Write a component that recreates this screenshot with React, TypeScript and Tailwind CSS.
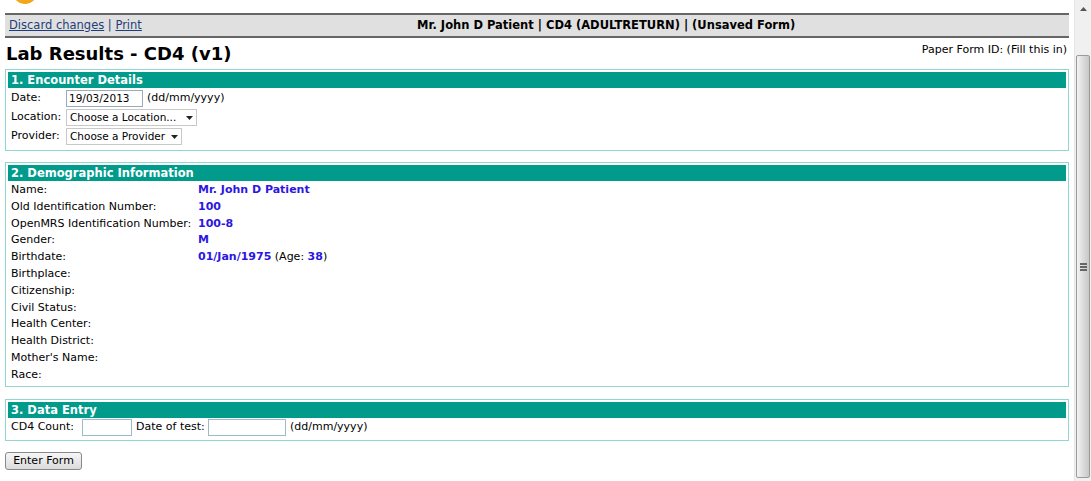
const font = { fontFamily: '"DejaVu Sans", Verdana, sans-serif' };

const demographics: [string, string | null][] = [
  ['Name:', 'Mr. John D Patient'],
  ['Old Identification Number:', '100'],
  ['OpenMRS Identification Number:', '100-8'],
  ['Gender:', 'M'],
  ['Birthdate:', '01/Jan/1975'],
  ['Birthplace:', null],
  ['Citizenship:', null],
  ['Civil Status:', null],
  ['Health Center:', null],
  ['Health District:', null],
  ["Mother's Name:", null],
  ['Race:', null],
];

function Section({ title, children }: { title: string; children: React.ReactNode }) {
  return (
    <div className="border border-[#8ed8cf] p-[2px]">
      <div className="bg-[#009b8b] text-white font-bold px-[3px] h-[16px] leading-[16px] text-[11.5px]">{title}</div>
      <div className="px-[3px]">{children}</div>
    </div>
  );
}

function FakeSelect({ label, width }: { label: string; width: string }) {
  return (
    <span className={`inline-flex items-center justify-between whitespace-nowrap border border-[#c8c8c8] bg-white h-[17px] px-[3px] text-[10.5px] ${width}`}>
      <span>{label}</span>
      <svg width="7" height="4" viewBox="0 0 7 4" className="ml-1 shrink-0">
        <path d="M0 0h7L3.5 4z" fill="#222" />
      </svg>
    </span>
  );
}

export default function App() {
  return (
    <div className="flex w-[1091px] h-[481px] overflow-hidden bg-white text-[11px] text-black" style={font}>
      <div className="flex-1 flex flex-col px-[5px]">
        <div className="h-[13px] relative">
          <div className="absolute left-[9px] top-[-8px] w-[22px] h-[12px] rounded-b-[10px] bg-[#f2a71b]" />
        </div>
        <div className="border-t-2 border-b-2 border-[#666] bg-[#e0e0e0] h-[25px] flex items-center">
          <div className="px-[4px] text-[#1f3f7a] w-[340px] shrink-0 text-[11.5px]">
            <span className="underline">Discard changes</span> | <span className="underline">Print</span>
          </div>
          <div className="font-bold text-[11.5px] pl-[72px]">Mr. John D Patient | CD4 (ADULTRETURN) | (Unsaved Form)</div>
        </div>
        <div className="flex items-start justify-between h-[31px]">
          <h1 className="font-bold text-[18px] leading-[31px] pl-[1px]">Lab Results - CD4 (v1)</h1>
          <div className="pt-[4px] pr-[2px]">Paper Form ID: (Fill this in)</div>
        </div>
        <Section title="1. Encounter Details">
          <div className="grid grid-cols-[55px_auto] auto-rows-[19px] pt-[1px] pb-[2px] items-center">
            <span>Date:</span>
            <span className="flex items-center gap-[4px]">
              <span className="inline-block border border-[#9ab] w-[77px] h-[17px] leading-[15px] px-[2px] text-[10.5px]">19/03/2013</span>
              (dd/mm/yyyy)
            </span>
            <span>Location:</span>
            <span className="flex"><FakeSelect label="Choose a Location..." width="w-[131px]" /></span>
            <span>Provider:</span>
            <span className="flex"><FakeSelect label="Choose a Provider" width="w-[116px]" /></span>
          </div>
        </Section>
        <div className="h-[11px]" />
        <Section title="2. Demographic Information">
          <div className="grid grid-cols-[187px_auto] pt-[1px] leading-[16.8px]">
            {demographics.map(([label, value]) => (
              <div key={label} className="contents">
                <span>{label}</span>
                <span className="text-[#2b17e0] font-bold">
                  {value}
                  {label === 'Birthdate:' && (
                    <span className="text-black font-normal">
                      {' '}(Age: <span className="text-[#2b17e0] font-bold">38</span>)
                    </span>
                  )}
                </span>
              </div>
            ))}
          </div>
        </Section>
        <div className="h-[12px]" />
        <Section title="3. Data Entry">
          <div className="flex items-center h-[20px] pb-[1px]">
            <span className="w-[71px]">CD4 Count:</span>
            <span className="inline-block border border-[#9bc] w-[50px] h-[17px]" />
            <span className="w-[72px] ml-[4px]">Date of test:</span>
            <span className="inline-block border border-[#9bc] w-[78px] h-[17px]" />
            <span className="ml-[4px]">(dd/mm/yyyy)</span>
          </div>
        </Section>
        <div className="pt-[11px]">
          <button className="border border-[#888] rounded-[3px] bg-gradient-to-b from-[#f6f6f6] to-[#dcdcdc] h-[18px] w-[77px] text-[11px] leading-[16px]" style={font}>
            Enter Form
          </button>
        </div>
      </div>
      <div className="w-[17px] shrink-0 bg-[#f0f0f0] border-l border-[#e6e6e6] flex flex-col items-center pb-[3px]">
        <div className="h-[17px] flex items-center justify-center">
          <svg width="7" height="4" viewBox="0 0 7 4"><path d="M0 4h7L3.5 0z" fill="#555" /></svg>
        </div>
        <div className="h-[38px]" />
        <div className="flex-1 w-[14px] rounded-[2px] border border-[#9a9a9a] bg-gradient-to-r from-[#f4f4f4] via-[#dcdcdc] to-[#c8c8c8] flex items-center justify-center">
          <div className="flex flex-col gap-[1px]">
            <div className="w-[7px] h-[2px] bg-[#666]" />
            <div className="w-[7px] h-[2px] bg-[#666]" />
            <div className="w-[7px] h-[2px] bg-[#666]" />
          </div>
        </div>
      </div>
    </div>
  );
}
